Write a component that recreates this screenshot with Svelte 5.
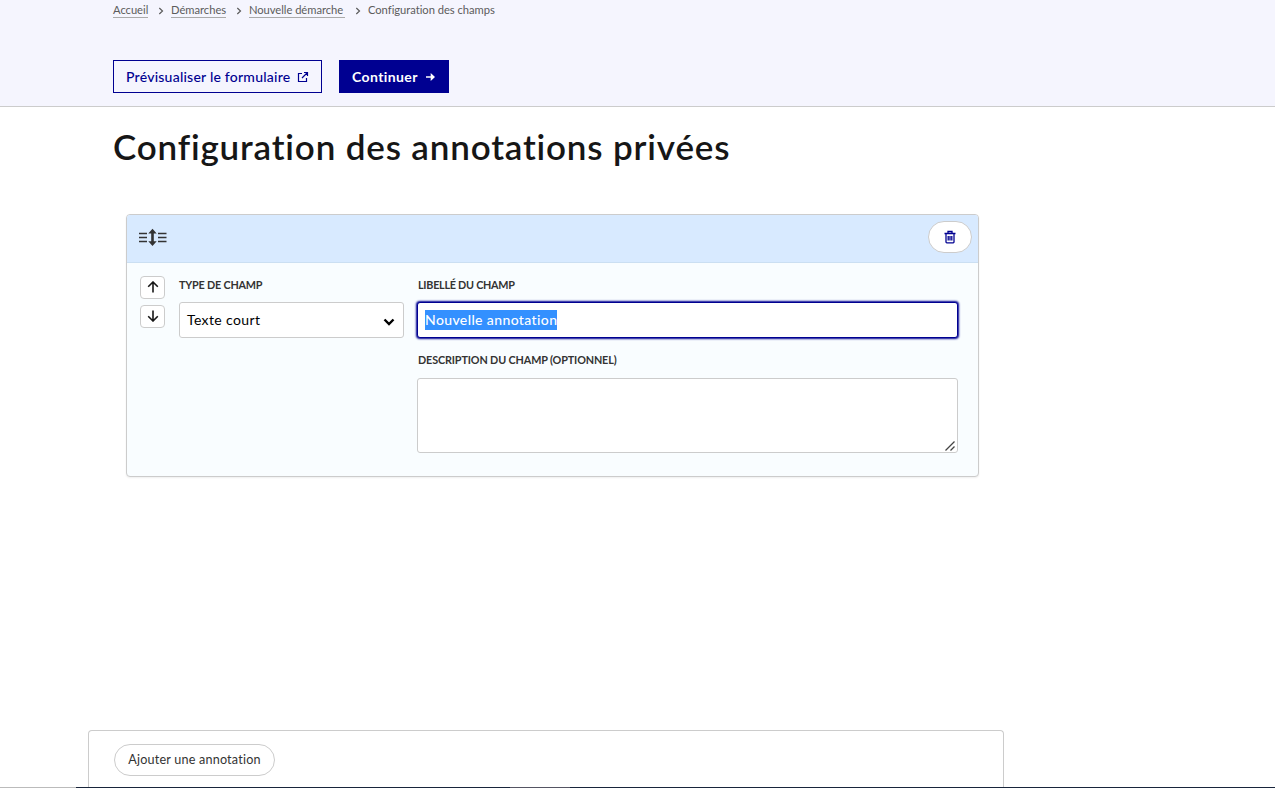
<script>
  const crumbs = [
    { label: 'Accueil' },
    { label: 'Démarches' },
    { label: 'Nouvelle démarche', wide: true }
  ];
  let label = $state('Nouvelle annotation');
  let description = $state('');
</script>

<div class="page">
  <header>
    <nav>
      {#each crumbs as crumb}
        <a href="#top" class:wide={crumb.wide}>{crumb.label}</a>
        <svg class="sep" viewBox="0 0 6 8"><path d="M1.3 1 4.5 4 1.3 7" /></svg>
      {/each}
      <span>Configuration des champs</span>
    </nav>
    <div class="actions">
      <button class="btn outline">
        <span>Prévisualiser le formulaire</span>
        <svg viewBox="0 0 12 12"><path d="M5 2.5H1.5v8h8V7M7 1.5h3.5V5M10.5 1.5 5 7" /></svg>
      </button>
      <button class="btn solid">
        <span>Continuer</span>
        <svg viewBox="0 0 10 8"><path d="M0 4h6" /><path class="head" d="M4.7 0 9 4 4.7 8z" /></svg>
      </button>
    </div>
  </header>

  <main>
    <h1>Configuration des annotations privées</h1>
    <section class="card">
      <div class="card-head">
        <svg class="handle" viewBox="0 0 28 18">
          <path d="M0 5.5h8M0 9.5h8M0 13.5h8M19 5.5h8.5M19 9.5h8.5M19 13.5h8.5" />
          <path class="stem" d="M13.5 4v11" />
          <path class="tip" d="M13.5 .8 17.7 5.5H9.3zM13.5 18 17.7 13.3H9.3z" />
        </svg>
        <button class="delete" aria-label="Supprimer">
          <svg viewBox="0 0 12 14"><path d="M.5 3.5h11M4 3V1.5h4V3M2 3.5V12q0 .8.8.8h6.4q.8 0 .8-.8V3.5M4.2 6v4.5M6 6v4.5M7.8 6v4.5" /></svg>
        </button>
      </div>
      <div class="card-body">
        <div class="moves">
          <button aria-label="Monter"><svg viewBox="0 0 12 12"><path d="M6 11.5V1M1.2 5.7 6 1l4.8 4.7" /></svg></button>
          <button aria-label="Descendre"><svg viewBox="0 0 12 12"><path d="M6 .5V11M1.2 6.3 6 11l4.8-4.7" /></svg></button>
        </div>
        <div class="type">
          <div class="label first">TYPE DE CHAMP</div>
          <div class="select">
            <span>Texte court</span>
            <svg viewBox="0 0 12 8"><path d="M1.5 1.5 6 6l4.5-4.5" /></svg>
          </div>
        </div>
        <div class="text">
          <div class="label tight">LIBELLÉ DU CHAMP</div>
          <div class="input"><mark>{label}</mark></div>
          <div class="label second">DESCRIPTION DU CHAMP (OPTIONNEL)</div>
          <div class="area">{description}
            <svg viewBox="0 0 10 10"><path d="M.5 9.5l9-9M5.5 9.5l4-4" /></svg>
          </div>
        </div>
      </div>
    </section>
  </main>

  <footer><button>Ajouter une annotation</button></footer>
  <div class="edge"><i></i><b></b><em></em><b></b></div>
</div>

<style>
  :global(body) { margin: 0; background: #fff; }
  .page { box-sizing: border-box; height: 788px; overflow: hidden; display: flex; flex-direction: column; font-family: Lato, sans-serif; font-variant-ligatures: none; color: #161616; }
  svg { display: block; flex: none; fill: none; stroke: currentColor; }
  button { font: inherit; margin: 0; padding: 0; box-sizing: border-box; }
  header { box-sizing: border-box; flex: none; height: 107px; padding: 0 113px; background: #f5f5fe; border-bottom: 1px solid #ccc; }
  nav { display: flex; height: 60px; align-items: flex-start; font-size: 11.2px; line-height: 20px; letter-spacing: -.03px; color: #5c5c5c; white-space: nowrap; }
  nav a { color: inherit; text-decoration: none; line-height: 17px; padding-top: 1px; height: 16px; border-bottom: 1px solid #aaa; }
  nav .wide { padding-right: 2px; }
  .sep { width: 6px; height: 8px; margin: 7px 7px 0 9.8px; stroke-width: 1.2; }
  .actions { display: flex; gap: 17px; }
  .btn { height: 33px; display: flex; align-items: center; justify-content: space-between; padding: 0 12px; border: 1px solid #000091; font-size: 14px; white-space: nowrap; }
  .outline { width: 209px; background: transparent; color: #000091; font-weight: 500; letter-spacing: .23px; }
  .outline svg { width: 12px; height: 12px; stroke-width: 1.2; }
  .solid { width: 110px; background: #000091; color: #fff; font-weight: 700; letter-spacing: .4px; }
  .solid svg { width: 10px; height: 8px; stroke-width: 1.5; }
  .solid .head { fill: currentColor; stroke: none; }
  main { flex: 1; padding-left: 113px; }
  h1 { margin: 0; height: 107px; padding-top: 15px; box-sizing: border-box; font-size: 35px; line-height: 48px; font-weight: 600; letter-spacing: .83px; white-space: nowrap; }
  .card { box-sizing: border-box; width: 853px; height: 263px; margin-left: 13px; border: 1px solid #ccc; border-radius: 4px; background: #f9fdff; box-shadow: 0 1px 2px #0001; overflow: hidden; }
  .card-head { box-sizing: border-box; height: 48px; padding: 0 6px 3px 12px; display: flex; align-items: center; justify-content: space-between; background: #d8eaff; border-bottom: 1px solid #cbdff2; }
  .handle { width: 28px; height: 18px; color: #333; stroke-width: 1.5; }
  .stem { stroke-width: 2.6; }
  .tip { fill: currentColor; stroke: none; }
  .delete { width: 44px; height: 32px; border: 1px solid #ccc; border-radius: 16px; background: #fff; color: #000091; display: flex; align-items: center; justify-content: center; }
  .delete svg { width: 12px; height: 14px; margin-right: 1px; stroke-width: 1.3; }
  .card-body { display: flex; padding: 13px 20px 0 13px; }
  .moves { display: flex; flex-direction: column; gap: 6px; width: 39px; }
  .moves button { width: 25px; height: 23px; border: 1px solid #ccc; border-radius: 4px; background: #fff; color: #161616; display: flex; align-items: center; justify-content: center; }
  .moves svg { width: 12px; height: 12px; margin-bottom: 1px; stroke-width: 1.6; }
  .type { width: 225px; margin-right: 13px; }
  .label { height: 26px; line-height: 18px; font-size: 10.8px; font-weight: 700; letter-spacing: -.13px; color: #333; white-space: nowrap; }
  .first { letter-spacing: -.2px; }
  .select { box-sizing: border-box; width: 225px; height: 36px; display: flex; justify-content: space-between; align-items: center; padding: 0 8px 0 7px; border: 1px solid #ccc; border-radius: 3px; background: #fff; font-size: 14px; color: #000; font-weight: 400; letter-spacing: .38px; }
  .select span { padding-bottom: 2px; }
  .select svg { width: 12px; height: 8px; margin-top: 3px; stroke-width: 2.4; }
  .text { width: 541px; }
  .text .label { padding-left: 1px; }
  .text .tight { letter-spacing: -.26px; }
  .input { box-sizing: border-box; height: 36px; padding-left: 7px; display: flex; align-items: center; border: 1px solid #000091; border-radius: 3px; background: #fff; box-shadow: 0 0 2px 1px #000091; font-size: 14px; font-weight: 500; }
  mark { background: #3390ff; color: #fff; line-height: 20px; height: 20px; letter-spacing: .38px; white-space: nowrap; }
  .text .second { height: 40px; padding-top: 13px; box-sizing: border-box; }
  .area { box-sizing: border-box; height: 75px; border: 1px solid #ccc; border-radius: 3px; background: #fff; display: flex; justify-content: flex-end; align-items: flex-end; padding: 1px 2px; }
  .area svg { width: 10px; height: 10px; color: #444; stroke-width: 1.3; }
  footer { box-sizing: border-box; flex: none; width: 916px; height: 57px; margin-left: 88px; border: 1px solid #ccc; border-bottom: 0; border-radius: 4px 4px 0 0; padding: 13px 25px 0; }
  footer button { width: 161px; height: 32px; padding-bottom: 2px; border: 1px solid #ccc; border-radius: 16px; background: #fff; font-size: 12.6px; letter-spacing: .2px; color: #333; white-space: nowrap; }
  .edge { display: flex; flex: none; height: 1px; }
  .edge i { width: 76px; background: #bbb; }
  .edge b { width: 434px; background: #18253b; }
  .edge em { width: 60px; background: #555563; }
  .edge b:last-child { flex: 1; }
</style>
